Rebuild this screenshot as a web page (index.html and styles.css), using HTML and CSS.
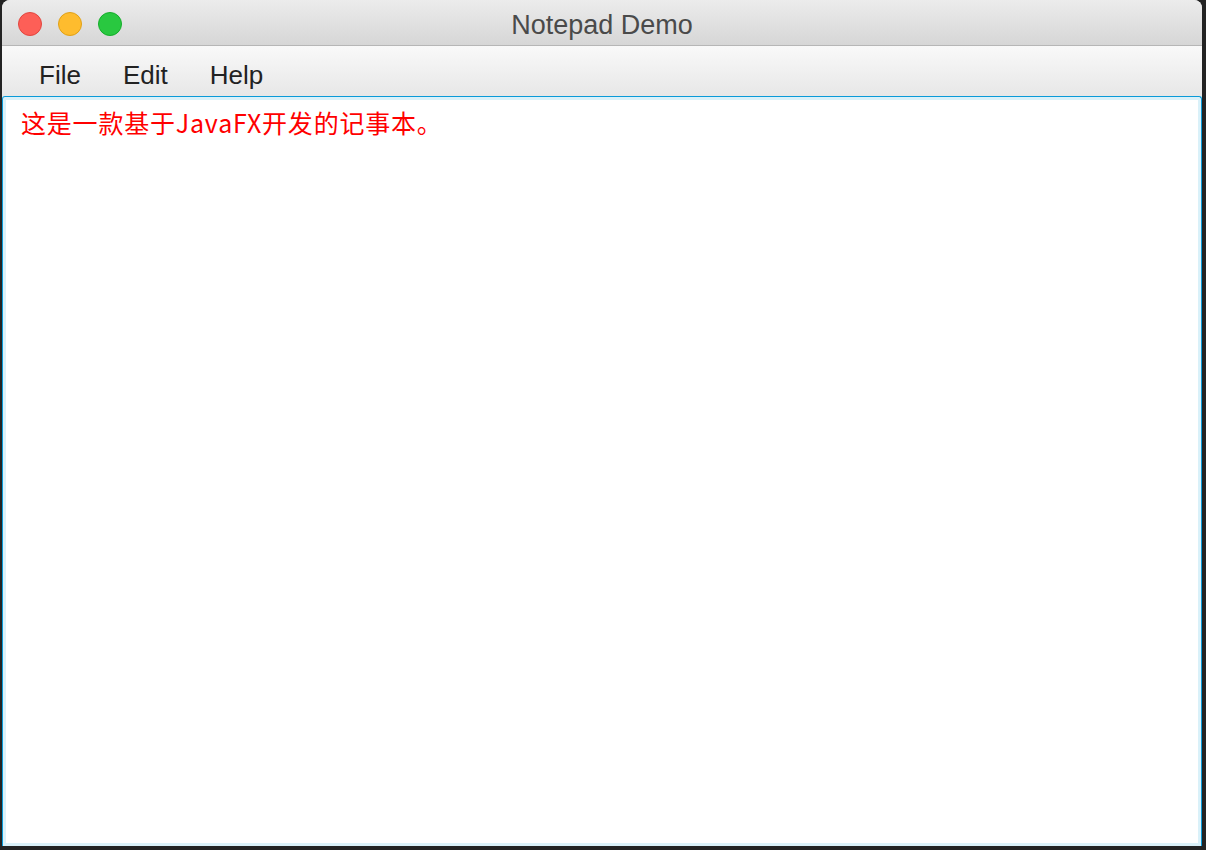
FILE: index.html
```html
<!DOCTYPE html>
<html lang="zh">
<head>
<meta charset="utf-8">
<title>Notepad Demo</title>
<link rel="stylesheet" href="styles.css">
</head>
<body>
<div class="window">
  <div class="titlebar">
    <div class="lights">
      <span class="light close"></span>
      <span class="light min"></span>
      <span class="light max"></span>
    </div>
    <div class="title">Notepad Demo</div>
  </div>
  <div class="menubar">
    <span class="menu">File</span>
    <span class="menu">Edit</span>
    <span class="menu">Help</span>
  </div>
  <div class="editor">
    <div class="content">这是一款基于JavaFX开发的记事本。</div>
  </div>
</div>
</body>
</html>
```
FILE: styles.css
```css
html, body {
  margin: 0;
  padding: 0;
  background: #232323;
  height: 850px;
  overflow: hidden;
}
.window {
  margin-left: 2px;
  width: 1200px;
  height: 846px;
  display: flex;
  flex-direction: column;
  background: #ececec;
  border-radius: 8px 8px 0 0;
  overflow: hidden;
}
.titlebar {
  position: relative;
  height: 45px;
  flex: none;
  background: linear-gradient(#ececec, #d6d6d6);
  border-bottom: 1px solid #b6b6b6;
  display: flex;
  align-items: center;
  justify-content: center;
}
.lights {
  position: absolute;
  left: 16px;
  top: 12px;
  display: flex;
  gap: 16px;
}
.light {
  width: 24px;
  height: 24px;
  border-radius: 50%;
  box-sizing: border-box;
}
.close { background: #fd5f57; border: 1px solid #e2463f; }
.min { background: #febc2e; border: 1px solid #e1a116; }
.max { background: #29c840; border: 1px solid #14ae2a; }
.title {
  font-family: "Liberation Sans", Arial, sans-serif;
  font-size: 27px;
  color: #4a4a4a;
  margin-top: 5px;
}
.menubar {
  height: 50px;
  flex: none;
  background: linear-gradient(#f9f9f9, #e7e7e7);
  display: flex;
  align-items: center;
  padding-left: 37px;
  gap: 42px;
  box-sizing: border-box;
  padding-top: 8px;
}
.menu {
  font-family: "Liberation Sans", Arial, sans-serif;
  font-size: 26px;
  color: #222;
}
.editor {
  flex: 1;
  border: 1px solid #0a9ad8;
  border-bottom: none;
  background: #fff;
  box-shadow: inset 0 0 0 3px #daf1f9;
  border-radius: 3px 3px 0 0;
  padding: 10px 18px;
}
.content {
  font-family: "Noto Sans CJK SC", sans-serif;
  font-size: 25px;
  letter-spacing: 0.8px;
  line-height: 30px;
  color: #ff0000;
}
```
